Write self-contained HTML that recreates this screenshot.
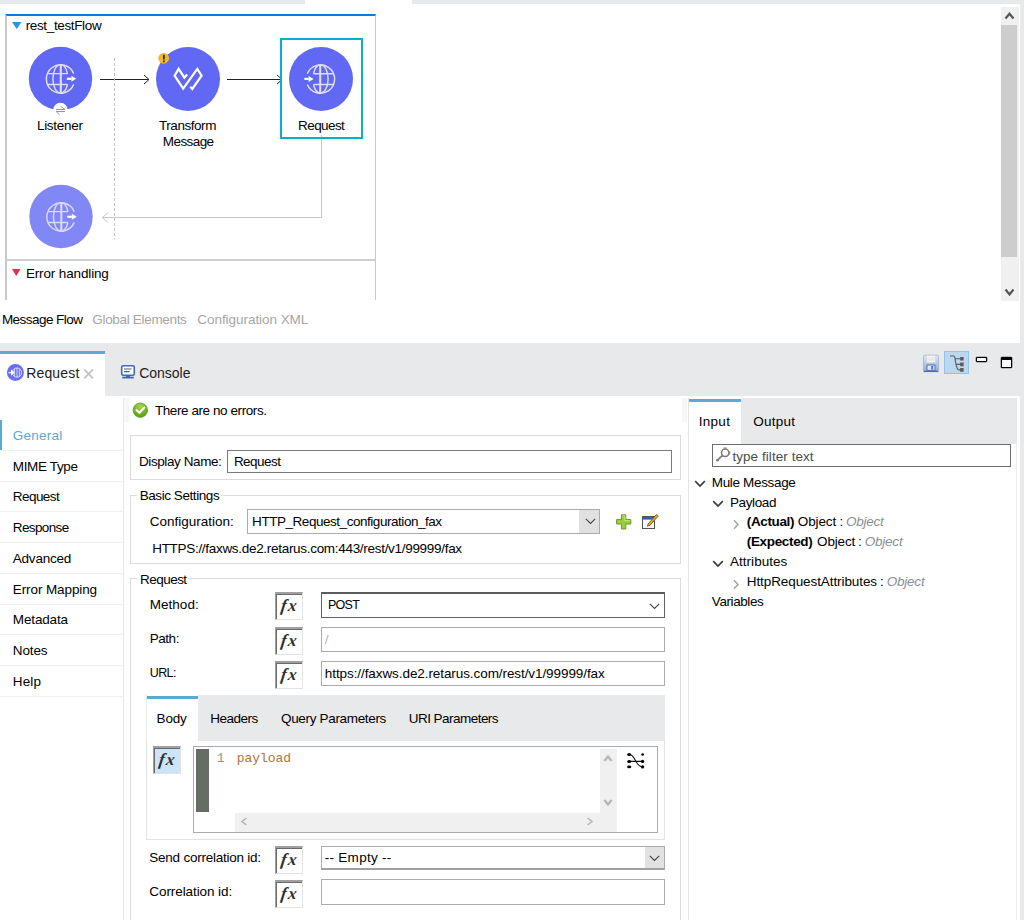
<!DOCTYPE html>
<html lang="en">
<head>
<meta charset="utf-8">
<title>Anypoint Studio - Request</title>
<style>
*{box-sizing:border-box;margin:0;padding:0}
html,body{width:1024px;height:920px;overflow:hidden;background:#fff}
body{position:relative;font-family:"Liberation Sans",sans-serif;font-size:13.5px;color:#000}
.a{position:absolute}
.t{position:absolute;white-space:nowrap;line-height:16px;height:16px}
.g{background:#e8e9eb}
.box{position:absolute;border:1px solid #dcdcdc}
.inp{position:absolute;border:1px solid #7a7a7a;background:#fff}
.inpl{position:absolute;border:1px solid #ababab;background:#fff}
.fx{position:absolute;width:28px;height:28px;border:1px solid #e3e3e3;border-top:2px solid #a0a0a0;border-left:1px solid #a0a0a0;background:#fff;box-shadow:inset 1px 1px 0 #6a6a6a}
.hl{position:absolute;height:1px;background:#f0f0f0;left:0;width:123px}
</style>
</head>
<body>
<!-- top strips -->
<div class="a g" style="left:0;top:0;width:305px;height:4px"></div>
<div class="a g" style="left:412px;top:0;width:612px;height:4px"></div>
<div class="a g" style="left:1020px;top:0;width:4px;height:920px"></div>
<div class="a g" style="left:0;top:343px;width:1024px;height:53px"></div>
<!-- CANVAS -->
<div class="a" style="left:0;top:0;width:1001px;height:300px;overflow:hidden">
<div class="a" style="left:5px;top:14px;width:371px;height:300px;border-left:2px solid #c9c9c9;border-right:1px solid #c9c9c9;border-top:2px solid #0a7ade"></div>
<div class="a" style="left:7px;top:259px;width:368px;height:2px;background:#cfcfcf"></div>
<svg class="a" style="left:12px;top:22px" width="10" height="8" viewBox="0 0 10 8"><path d="M0 0H9.5L4.75 7Z" fill="#2196f3"/></svg>
<div class="t" style="left:25.7px;top:18px;letter-spacing:-0.36px;">rest_testFlow</div>
<svg class="a" style="left:12px;top:269px" width="10" height="8" viewBox="0 0 10 8"><path d="M0 0H8.5L4.25 7Z" fill="#e0304a"/></svg>
<div class="t" style="left:25.9px;top:266px;letter-spacing:-0.14px;">Error handling</div>
<svg class="a" style="left:0;top:0" width="400" height="300" viewBox="0 0 400 300" fill="none">
<path d="M100 79.5H148.5M144 75L149 79.5L144 84" stroke="#222" stroke-width="1"/>
<path d="M227 79.5H281.5M277 75L282 79.5L277 84" stroke="#222" stroke-width="1"/>
<path d="M114.5 58V239" stroke="#c2c2c6" stroke-width="1" stroke-dasharray="3 2"/>
<path d="M321.5 135V217.5H102.5M108 212.5L102.5 217.5L108 222.5" stroke="#c6c6c6" stroke-width="1"/>
</svg>
<div class="a" style="left:280px;top:38px;width:83px;height:101px;border:2px solid #08aecb"></div>
<svg class="a" style="left:0;top:0" width="400" height="300" viewBox="0 0 400 300" fill="none">
<circle cx="60.5" cy="78.5" r="31.7" fill="#6169f4"/>
<circle cx="188" cy="79" r="32" fill="#6169f4"/>
<circle cx="321" cy="79" r="32" fill="#6169f4"/>
<circle cx="61" cy="216.5" r="31.7" fill="#8287f6"/>
<g fill="none" stroke="#dedefb" stroke-width="1.45" transform="translate(60.5 78.8)">
<path d="M13.2 -5.2A14.2 14.2 0 1 0 13.2 5.6"/>
<path d="M0.3 -14.2V14.2" stroke-width="2.1"/>
<path d="M0 -14.2A7.6 14.2 0 0 0 0 14.2"/>
<path d="M0 -14.2A7.6 14.2 0 0 1 7 -5.2M0 14.2A7.6 14.2 0 0 0 7 5.6"/>
<path d="M-13.2 -5.2H7M-13.2 5.6H7"/>
</g>
<path d="M66.8 78.8H71.4" stroke="#fff" stroke-width="2.2"/><path d="M71.4 75.8L76.2 78.8L71.4 81.8Z" fill="#fff"/>
<g fill="none" stroke="#dedefb" stroke-width="1.45" transform="translate(320.5 78.9) scale(-1 1)">
<path d="M13.2 -5.2A14.2 14.2 0 1 0 13.2 5.6"/>
<path d="M0.3 -14.2V14.2" stroke-width="2.1"/>
<path d="M0 -14.2A7.6 14.2 0 0 0 0 14.2"/>
<path d="M0 -14.2A7.6 14.2 0 0 1 7 -5.2M0 14.2A7.6 14.2 0 0 0 7 5.6"/>
<path d="M-13.2 -5.2H7M-13.2 5.6H7"/>
</g>
<path d="M304.4 78.9H308.6" stroke="#fff" stroke-width="2.2"/><path d="M308.6 75.9L313.6 78.9L308.6 81.9Z" fill="#fff"/>
<g fill="none" stroke="#dedefb" stroke-width="1.45" transform="translate(61 216.8)" opacity="0.95">
<path d="M13.2 -5.2A14.2 14.2 0 1 0 13.2 5.6"/>
<path d="M0.3 -14.2V14.2" stroke-width="2.1"/>
<path d="M0 -14.2A7.6 14.2 0 0 0 0 14.2"/>
<path d="M0 -14.2A7.6 14.2 0 0 1 7 -5.2M0 14.2A7.6 14.2 0 0 0 7 5.6"/>
<path d="M-13.2 -5.2H7M-13.2 5.6H7"/>
</g>
<path d="M67.3 216.8H71.9" stroke="#fff" stroke-width="2.2"/><path d="M71.9 213.8L76.7 216.8L71.9 219.8Z" fill="#fff"/>
<path d="M187.1 74.6L184.4 77.6L178.6 68.9L174.6 75.7L183.2 88.6L197.3 68.9L201.6 75.7L192.3 89L190.3 86.8" stroke="#fff" stroke-width="2.2" stroke-linejoin="miter"/>
<circle cx="163.7" cy="58.3" r="5.4" fill="#f2b62c"/>
<path d="M163.9 54.8V59.4M163.9 60.6V62.2" stroke="#3a2a00" stroke-width="1.7"/>
<circle cx="60.4" cy="110.2" r="7.4" fill="#fff"/>
<path d="M56.1 109.5H64.9L60.6 106.3M64.9 111.5H56.1L59.6 114.8" stroke="#8a8a8a" stroke-width="0.9"/>
</svg>
<div class="t" style="left:36.9px;top:118px;letter-spacing:-0.27px;">Listener</div><div class="t" style="left:159.0px;top:118px;letter-spacing:-0.45px;">Transform</div><div class="t" style="left:162.8px;top:134px;letter-spacing:-0.58px;">Message</div><div class="t" style="left:298.1px;top:118px;letter-spacing:-0.59px;">Request</div>
</div>
<!-- canvas scrollbar -->
<div class="a" style="left:1001px;top:7px;width:18px;height:294px;background:#f0f0f0"></div>
<div class="a" style="left:1001px;top:25px;width:16px;height:232px;background:#cdcdcd"></div>
<svg class="a" style="left:1004px;top:11px" width="11" height="9" viewBox="0 0 11 9"><path d="M1.5 7.5L5.5 2.8L9.5 7.5" stroke="#555" stroke-width="2.2" fill="none"/></svg>
<svg class="a" style="left:1004px;top:288px" width="11" height="9" viewBox="0 0 11 9"><path d="M1.5 1.5L5.5 6.5L9.5 1.5" stroke="#555" stroke-width="2.2" fill="none"/></svg>
<div class="t" style="left:1.9px;top:312px;letter-spacing:-0.54px;">Message Flow</div><div class="t" style="left:92.3px;top:312px;color:#a6a6a6;letter-spacing:-0.32px;">Global Elements</div><div class="t" style="left:197.3px;top:312px;color:#a6a6a6;letter-spacing:-0.05px;">Configuration XML</div><!-- PROPERTIES TABS -->
<div class="a" style="left:0;top:351px;width:105px;height:45px;background:#fff;border-top:3px solid #5aa9d6"></div>
<svg class="a" style="left:6px;top:363px" width="19" height="19" viewBox="0 0 19 19" fill="none">
<circle cx="9.4" cy="9.6" r="8.5" fill="#6b6ff5"/>
<circle cx="11" cy="9.6" r="4.6" stroke="#dcdcfb" stroke-width="1"/>
<path d="M11 5V14.2M8.6 5.8V13.4M13.4 5.8V13.4" stroke="#dcdcfb" stroke-width="0.9"/>
<path d="M2.6 9.6H6M5.6 7.6L8 9.6L5.6 11.6Z" stroke="#fff" stroke-width="1.1" fill="#fff"/>
</svg>
<div class="t" style="left:26.2px;top:365px;font-size:14px;color:#1c1c1c;letter-spacing:0.16px;">Request</div>
<svg class="a" style="left:83px;top:368px" width="12" height="12" viewBox="0 0 12 12"><path d="M1.3 1.3L10 10.4M10 1.3L1.3 10.4" stroke="#c2c2c2" stroke-width="1.7"/></svg>
<svg class="a" style="left:120px;top:364px" width="16" height="16" viewBox="0 0 16 16" fill="none">
<rect x="1.7" y="1.7" width="12.6" height="9.6" rx="1.6" fill="#fff" stroke="#3f6db3" stroke-width="1.6"/>
<path d="M4 5H11.5M4 7.6H9.5" stroke="#4a5f88" stroke-width="1.1"/>
<path d="M2.2 13.6H13.8" stroke="#3f6db3" stroke-width="1.8"/>
<path d="M6 11.5H10V13H6Z" fill="#3f6db3"/>
</svg>
<div class="t" style="left:139.2px;top:365px;font-size:14px;color:#1c1c1c;letter-spacing:-0.01px;">Console</div>
<!-- view toolbar -->
<svg class="a" style="left:922px;top:354px" width="18" height="19" viewBox="0 0 18 19" fill="none">
<defs><linearGradient id="fl" x1="0" y1="0" x2="0" y2="1"><stop offset="0" stop-color="#dfe8f5"/><stop offset="1" stop-color="#93acd6"/></linearGradient></defs>
<rect x="1.4" y="1.2" width="15.2" height="16" rx="1.6" fill="url(#fl)" stroke="#9db3d8" stroke-width="0.8"/>
<rect x="4.3" y="1.6" width="9.4" height="7" fill="#f4f6f4" stroke="#c9cfc6" stroke-width="0.6"/>
<path d="M5.4 4H12.6M5.4 6H12.6" stroke="#d5d9d2" stroke-width="0.8"/>
<rect x="5" y="11" width="8" height="5.4" fill="#dfe7f3" stroke="#5577b5" stroke-width="1"/>
<rect x="9.2" y="12" width="2" height="3.6" fill="#5577b5"/>
<path d="M1.6 17.4H16.4" stroke="#4f6fae" stroke-width="1.4"/>
</svg>
<div class="a" style="left:944px;top:351px;width:25px;height:23px;background:#bdd7ee;border:1px solid #8fc3f1"></div>
<svg class="a" style="left:944px;top:351px" width="25" height="23" viewBox="0 0 25 23" fill="none">
<path d="M6 5H9.6C11.2 5 11 8 11.6 11C12.4 15.5 12.6 18.9 15 18.9H19M10.8 7.8H19M11.8 13.4H19" stroke="#5a5a5a" stroke-width="1.1"/>
<path d="M16.2 6H19.6V9.6H16.2ZM16.2 11.6H19.6V15.2H16.2ZM16.2 17.1H19.6V20.7H16.2Z" fill="#5a5a5a"/>
</svg>
<div class="a" style="left:976px;top:357px;width:11px;height:5px;background:#fff;border:1px solid #000;border-radius:1px;box-shadow:0 0 0 0.3px #222"></div>
<div class="a" style="left:1001px;top:357px;width:11px;height:11px;background:#fff;border:1px solid #000;border-top-width:3px;border-radius:1px;box-shadow:0 0 0 0.3px #222"></div>
<!-- LEFT NAV -->
<div class="a" style="left:0;top:420px;width:2px;height:30px;background:#5aa9d6"></div>
<div class="a" style="left:123px;top:398px;width:1px;height:522px;background:#e9e9e9"></div>
<div class="t" style="left:12.8px;top:428px;color:#5aa9d6;letter-spacing:0.25px;">General</div><div class="hl" style="top:450px"></div>
<div class="t" style="left:12.8px;top:459px;letter-spacing:-0.36px;">MIME Type</div><div class="hl" style="top:481px"></div>
<div class="t" style="left:12.8px;top:489px;letter-spacing:-0.55px;">Request</div><div class="hl" style="top:511px"></div>
<div class="t" style="left:12.8px;top:520px;letter-spacing:-0.62px;">Response</div><div class="hl" style="top:542px"></div>
<div class="t" style="left:12.8px;top:551px;letter-spacing:-0.22px;">Advanced</div><div class="hl" style="top:573px"></div>
<div class="t" style="left:12.8px;top:582px;letter-spacing:-0.10px;">Error Mapping</div><div class="hl" style="top:604px"></div>
<div class="t" style="left:12.8px;top:612px;letter-spacing:-0.14px;">Metadata</div><div class="hl" style="top:634px"></div>
<div class="t" style="left:12.8px;top:643px;letter-spacing:-0.14px;">Notes</div><div class="hl" style="top:665px"></div>
<div class="t" style="left:12.8px;top:674px;letter-spacing:0.13px;">Help</div><div class="hl" style="top:696px"></div>
<!-- MAIN FORM -->
<div class="a" style="left:124px;top:398px;width:5px;height:24px;background:#f6f6f6"></div>
<div class="a" style="left:682px;top:398px;width:5px;height:24px;background:#f6f6f6"></div>
<svg class="a" style="left:132px;top:402px" width="17" height="17" viewBox="0 0 17 17" fill="none">
<defs><radialGradient id="gr" cx="0.5" cy="0.25" r="0.8"><stop offset="0" stop-color="#a6d64a"/><stop offset="1" stop-color="#4f9a10"/></radialGradient></defs>
<circle cx="8.3" cy="8.2" r="7.2" fill="url(#gr)" stroke="#5c9e1c" stroke-width="0.8"/>
<path d="M4.6 8.2L7.4 10.8L12.2 5.6" stroke="#fff" stroke-width="2.2" stroke-linecap="round" stroke-linejoin="round"/>
</svg>
<div class="t" style="left:154.9px;top:403px;letter-spacing:-0.42px;">There are no errors.</div>
<div class="box" style="left:130px;top:435px;width:551px;height:45px"></div>
<div class="t" style="left:139.0px;top:454px;letter-spacing:-0.41px;">Display Name:</div>
<div class="inp" style="left:227px;top:450px;width:445px;height:23px"></div>
<div class="t" style="left:233.9px;top:454px;letter-spacing:-0.54px;">Request</div>
<div class="box" style="left:130px;top:495px;width:551px;height:69px"></div>
<div class="a" style="left:137px;top:489px;width:84px;height:12px;background:#fff"></div>
<div class="t" style="left:139.7px;top:488px;letter-spacing:-0.43px;">Basic Settings</div><div class="t" style="left:149.7px;top:514px;">Configuration:</div>
<div class="inpl" style="left:247px;top:509px;width:353px;height:25px"></div>
<div class="a" style="left:579px;top:510px;width:20px;height:23px;background:#e1e1e1"></div>
<svg class="a" style="left:584.6px;top:518.4px" width="11" height="7" viewBox="0 0 11 7"><path d="M0.8 0.8L5.5 5.4L10.2 0.8" stroke="#444" stroke-width="1.1" fill="none"/></svg><div class="t" style="left:252.1px;top:514px;letter-spacing:-0.46px;">HTTP_Request_configuration_fax</div>
<svg class="a" style="left:615px;top:513px" width="18" height="18" viewBox="0 0 18 18"><path d="M6.4 1.8H10.8V6.6H15.8V11H10.8V16H6.4V11H1.6V6.6H6.4Z" fill="#9ccc3c" stroke="#6a9a1e" stroke-width="1"/><path d="M7.4 2.8H9.8V7.6H14.8" stroke="#c9e88a" stroke-width="0.9" fill="none"/></svg>
<svg class="a" style="left:641px;top:512px" width="19" height="19" viewBox="0 0 19 19" fill="none">
<rect x="1.5" y="4.5" width="12" height="12" fill="#fbfbf4" stroke="#555" stroke-width="1"/>
<rect x="2" y="5" width="11" height="2.6" fill="#2f5fb0"/>
<path d="M7 12L15.6 2.4L17.4 4L8.8 13.4L6.4 14.2Z" fill="#e0a33c" stroke="#7a4a12" stroke-width="0.8"/>
</svg>
<div class="t" style="left:152.2px;top:541px;letter-spacing:-0.30px;">HTTPS://faxws.de2.retarus.com:443/rest/v1/99999/fax</div>
<div class="a" style="left:130px;top:578px;width:551px;height:360px;border:1px solid #dcdcdc"></div>
<div class="a" style="left:137px;top:572px;width:51px;height:12px;background:#fff"></div>
<div class="t" style="left:140.1px;top:572px;letter-spacing:-0.55px;">Request</div><div class="t" style="left:149.7px;top:597px;letter-spacing:0.04px;">Method:</div><div class="fx" style="left:275px;top:592px;background:#fff"></div><div class="t" style="left:280.9px;top:598px;font-size:17px;color:#2e2e2e;font-family:'Liberation Serif',serif;font-style:italic;font-weight:bold;letter-spacing:1.6px;transform:skewX(-8deg);">fx</div>
<div class="inp" style="left:321px;top:592px;width:344px;height:26px;border-color:#626262;border-top:2px solid #5c5c5c"></div>
<svg class="a" style="left:649px;top:602.5px" width="11" height="7" viewBox="0 0 11 7"><path d="M0.8 0.8L5.5 5.4L10.2 0.8" stroke="#444" stroke-width="1.1" fill="none"/></svg><div class="t" style="left:327.9px;top:597px;font-size:12.5px;letter-spacing:-0.71px;">POST</div><div class="t" style="left:149.7px;top:631px;letter-spacing:-0.45px;">Path:</div><div class="fx" style="left:275px;top:627px;background:#fff"></div><div class="t" style="left:280.9px;top:633px;font-size:17px;color:#2e2e2e;font-family:'Liberation Serif',serif;font-style:italic;font-weight:bold;letter-spacing:1.6px;transform:skewX(-8deg);">fx</div>
<div class="inpl" style="left:321px;top:627px;width:344px;height:25px"></div>
<div class="t" style="left:324.8px;top:632px;color:#b4b4bc;">/</div><div class="t" style="left:149.7px;top:665px;font-size:12.5px;letter-spacing:-0.57px;">URL:</div><div class="fx" style="left:275px;top:661px;background:#fff"></div><div class="t" style="left:280.9px;top:667px;font-size:17px;color:#2e2e2e;font-family:'Liberation Serif',serif;font-style:italic;font-weight:bold;letter-spacing:1.6px;transform:skewX(-8deg);">fx</div>
<div class="inpl" style="left:321px;top:661px;width:344px;height:25px"></div>
<div class="t" style="left:324.8px;top:666px;letter-spacing:-0.08px;">https://faxws.de2.retarus.com/rest/v1/99999/fax</div>
<!-- inner tabs -->
<div class="a" style="left:146px;top:695px;width:519px;height:145px;border:1px solid #e2e2e2;border-top:0"></div>
<div class="a g" style="left:146px;top:695px;width:519px;height:46px"></div>
<div class="a" style="left:147px;top:695px;width:51px;height:46px;background:#fff"></div>
<div class="a" style="left:147px;top:696px;width:51px;height:3px;background:#5aa9d6"></div>
<div class="t" style="left:156.6px;top:711px;letter-spacing:-0.21px;">Body</div><div class="t" style="left:210.3px;top:711px;letter-spacing:-0.51px;">Headers</div><div class="t" style="left:281.0px;top:711px;letter-spacing:-0.33px;">Query Parameters</div><div class="t" style="left:408.7px;top:711px;letter-spacing:-0.53px;">URI Parameters</div><div class="fx" style="left:153px;top:746px;background:#cce4f7"></div><div class="t" style="left:158.9px;top:752px;font-size:17px;color:#2e2e2e;font-family:'Liberation Serif',serif;font-style:italic;font-weight:bold;letter-spacing:1.6px;transform:skewX(-8deg);">fx</div>
<div class="inpl" style="left:193px;top:746px;width:465px;height:87px"></div>
<div class="a" style="left:196px;top:749px;width:13px;height:63px;background:#656d65"></div>
<div class="a" style="left:235px;top:813px;width:382px;height:19px;background:#f0f0f0"></div>
<div class="a" style="left:600px;top:749px;width:17px;height:64px;background:#f0f0f0"></div>
<div class="t" style="left:216.8px;top:751px;font-size:13px;color:#a0948a;font-family:'Liberation Mono',monospace;">1</div><div class="t" style="left:236.8px;top:751px;font-size:13px;color:#b07236;font-family:'Liberation Mono',monospace;letter-spacing:-0.06px;">payload</div>
<svg class="a" style="left:240px;top:817px" width="8" height="9" viewBox="0 0 8 9"><path d="M6.4 1L2 4.5L6.4 8" stroke="#b4b4b4" stroke-width="1.5" fill="none"/></svg>
<svg class="a" style="left:586px;top:817px" width="8" height="9" viewBox="0 0 8 9"><path d="M1.6 1L6 4.5L1.6 8" stroke="#b4b4b4" stroke-width="1.5" fill="none"/></svg>
<svg class="a" style="left:603px;top:754px" width="10" height="9" viewBox="0 0 10 9"><path d="M1.4 7L5 2.6L8.6 7" stroke="#b6b6b6" stroke-width="2.3" fill="none"/></svg>
<svg class="a" style="left:603px;top:798px" width="10" height="9" viewBox="0 0 10 9"><path d="M1.4 2L5 6.4L8.6 2" stroke="#b6b6b6" stroke-width="2.3" fill="none"/></svg>
<svg class="a" style="left:626px;top:751px" width="20" height="19" viewBox="0 0 20 19" fill="none">
<path d="M3.2 3.5C10 3.5 9 15.9 16.6 15.9M3.2 10.4H16.6" stroke="#111" stroke-width="1.1"/>
<ellipse cx="3.2" cy="3.5" rx="2.1" ry="1.5" fill="#000"/><ellipse cx="3.2" cy="10.4" rx="2.1" ry="1.5" fill="#000"/><ellipse cx="3.2" cy="15.9" rx="2.1" ry="1.4" fill="#000"/>
<circle cx="16.6" cy="3.5" r="1.35" fill="#000"/><circle cx="16.6" cy="10.4" r="1.6" fill="#000"/><circle cx="16.6" cy="15.9" r="1.6" fill="#000"/>
</svg>
<div class="t" style="left:149.3px;top:850px;letter-spacing:-0.24px;">Send correlation id:</div><div class="fx" style="left:275px;top:846px;background:#fff"></div><div class="t" style="left:280.9px;top:852px;font-size:17px;color:#2e2e2e;font-family:'Liberation Serif',serif;font-style:italic;font-weight:bold;letter-spacing:1.6px;transform:skewX(-8deg);">fx</div>
<div class="inpl" style="left:321px;top:846px;width:344px;height:24px;border-bottom:2px solid #a0a0a0"></div>
<div class="a" style="left:645px;top:847px;width:19px;height:21px;background:#e1e1e1"></div>
<svg class="a" style="left:649px;top:855px" width="11" height="7" viewBox="0 0 11 7"><path d="M0.8 0.8L5.5 5.4L10.2 0.8" stroke="#444" stroke-width="1.1" fill="none"/></svg><div class="t" style="left:324.8px;top:850px;letter-spacing:0.27px;">-- Empty --</div><div class="t" style="left:149.3px;top:884px;letter-spacing:-0.08px;">Correlation id:</div><div class="fx" style="left:275px;top:880px;background:#fff"></div><div class="t" style="left:280.9px;top:886px;font-size:17px;color:#2e2e2e;font-family:'Liberation Serif',serif;font-style:italic;font-weight:bold;letter-spacing:1.6px;transform:skewX(-8deg);">fx</div>
<div class="inpl" style="left:321px;top:879px;width:344px;height:26px"></div>
<!-- RIGHT PANEL -->
<div class="a" style="left:688px;top:398px;width:1px;height:522px;background:#e4e4e4"></div>
<div class="a" style="left:1016px;top:444px;width:1px;height:476px;background:#efefef"></div>
<div class="a g" style="left:689px;top:398px;width:328px;height:46px"></div>
<div class="a" style="left:689px;top:398px;width:52px;height:46px;background:#fff"></div>
<div class="a" style="left:689px;top:399px;width:52px;height:3px;background:#5aa9d6"></div>
<div class="t" style="left:698.7px;top:414px;letter-spacing:0.30px;">Input</div><div class="t" style="left:753.3px;top:414px;letter-spacing:0.24px;">Output</div>
<div class="inp" style="left:712px;top:444px;width:299px;height:23px;border-color:#6c6c6c"></div>
<svg class="a" style="left:715px;top:446px" width="17" height="17" viewBox="0 0 17 17" fill="none">
<circle cx="10.2" cy="6.8" r="3.7" stroke="#7a7a7a" stroke-width="1.5"/>
<path d="M7.6 9.4L2.2 14.4" stroke="#7a7a7a" stroke-width="1.7"/>
<path d="M8.4 2H12M14.8 5V8.4" stroke="#8a8a8a" stroke-width="1"/>
<circle cx="2.4" cy="14.2" r="1.3" fill="#7a7a7a"/>
</svg>
<div class="t" style="left:732.4px;top:449px;color:#4c4c4c;letter-spacing:0.06px;">type filter text</div><svg class="a" style="left:694px;top:480px" width="12" height="8" viewBox="0 0 12 8"><path d="M1.2 1.2L6 6L10.8 1.2" stroke="#3c3c3c" stroke-width="1.7" fill="none"/></svg><div class="t" style="left:711.8px;top:475px;letter-spacing:-0.34px;">Mule Message</div><svg class="a" style="left:712px;top:500px" width="12" height="8" viewBox="0 0 12 8"><path d="M1.2 1.2L6 6L10.8 1.2" stroke="#3c3c3c" stroke-width="1.7" fill="none"/></svg><div class="t" style="left:729.9px;top:495px;letter-spacing:-0.37px;">Payload</div><svg class="a" style="left:732.5px;top:519px" width="7" height="11" viewBox="0 0 7 11"><path d="M1 1.2L5 5.5L1 9.8" stroke="#a4a4a4" stroke-width="1.5" fill="none"/></svg><div class="t" style="left:746.8px;top:514px;letter-spacing:-0.38px;font-weight:bold;">(Actual)</div><div class="t" style="left:797.8px;top:514px;letter-spacing:-0.11px;">Object</div><div class="t" style="left:839.5px;top:514px;">:</div><div class="t" style="left:846.1px;top:514px;color:#8a8f98;letter-spacing:-0.27px;font-style:italic;">Object</div><div class="t" style="left:746.8px;top:534px;letter-spacing:-0.34px;font-weight:bold;">(Expected)</div><div class="t" style="left:817.1px;top:534px;letter-spacing:-0.16px;">Object</div><div class="t" style="left:858.0px;top:534px;">:</div><div class="t" style="left:864.7px;top:534px;color:#8a8f98;letter-spacing:-0.21px;font-style:italic;">Object</div><svg class="a" style="left:712px;top:559.5px" width="12" height="8" viewBox="0 0 12 8"><path d="M1.2 1.2L6 6L10.8 1.2" stroke="#3c3c3c" stroke-width="1.7" fill="none"/></svg><div class="t" style="left:729.9px;top:554px;letter-spacing:0.05px;">Attributes</div><svg class="a" style="left:732.5px;top:578.5px" width="7" height="11" viewBox="0 0 7 11"><path d="M1 1.2L5 5.5L1 9.8" stroke="#a4a4a4" stroke-width="1.5" fill="none"/></svg><div class="t" style="left:746.8px;top:574px;letter-spacing:-0.09px;">HttpRequestAttributes</div><div class="t" style="left:880.0px;top:574px;">:</div><div class="t" style="left:886.7px;top:574px;color:#8a8f98;letter-spacing:-0.21px;font-style:italic;">Object</div><div class="t" style="left:711.8px;top:594px;letter-spacing:-0.41px;">Variables</div>
</body>
</html>
